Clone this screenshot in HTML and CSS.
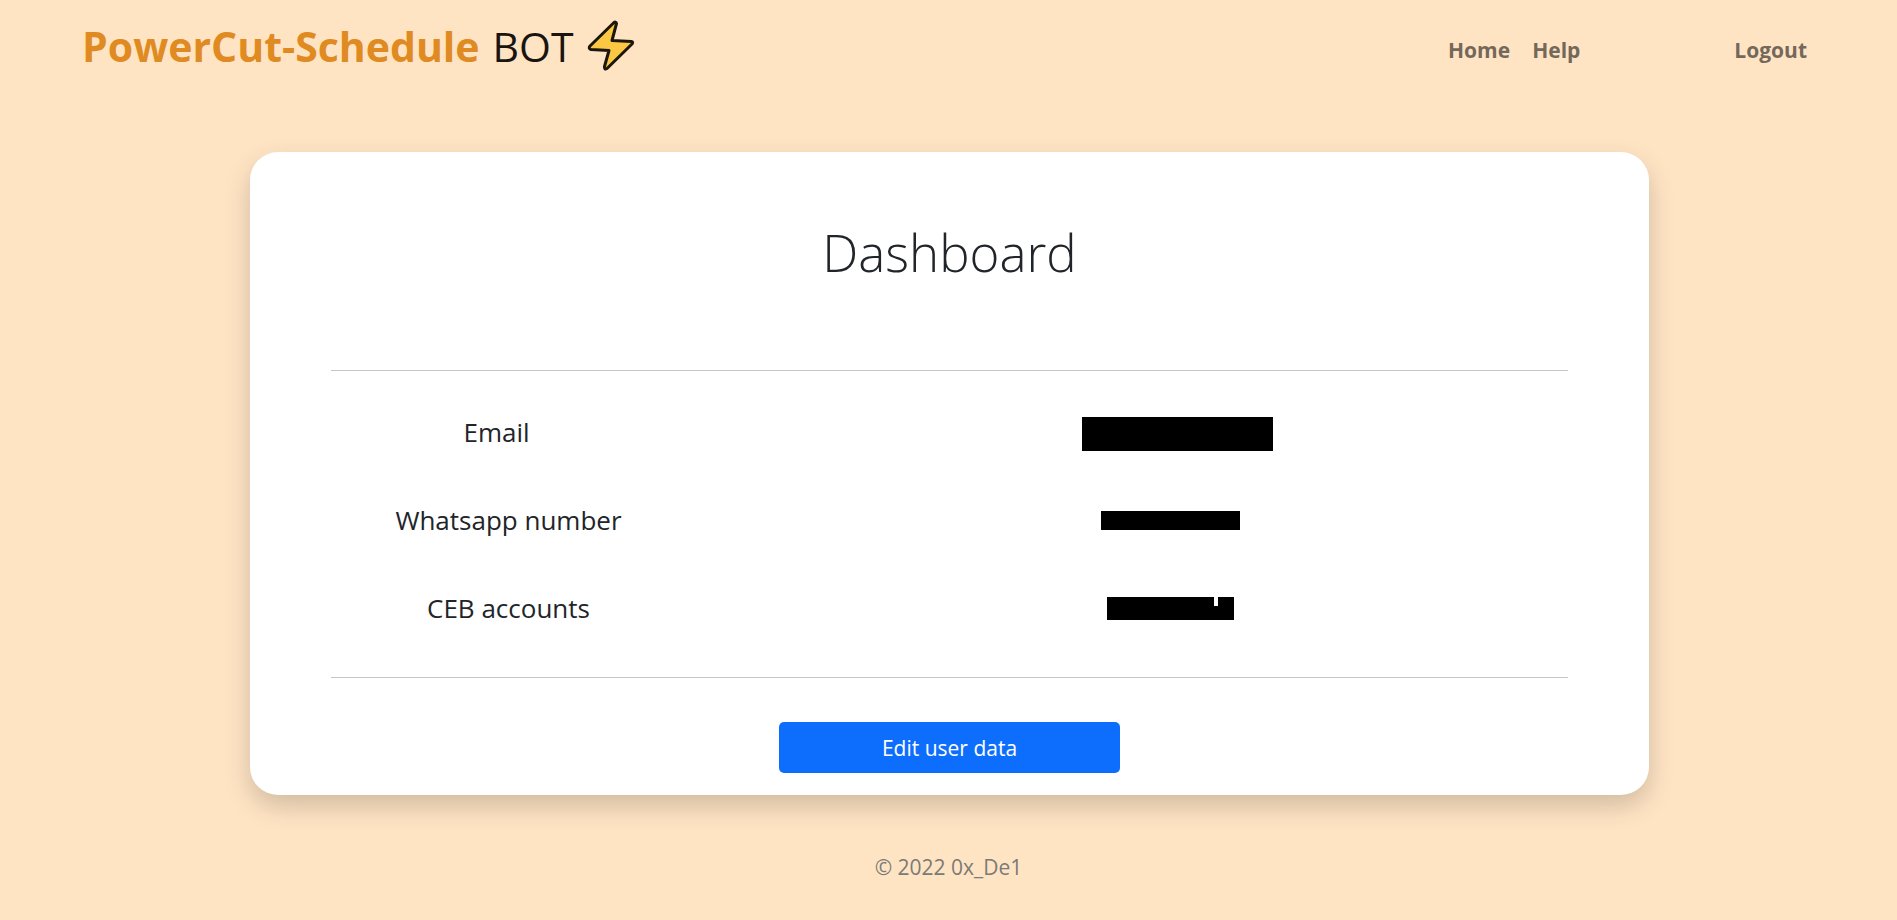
FILE: index.html
```html
<!DOCTYPE html>
<html lang="en">
<head>
<meta charset="utf-8">
<title>PowerCut-Schedule BOT</title>
<link rel="stylesheet" href="styles.css">
</head>
<body>
<header class="header">
  <a class="brand" href="#"><strong class="brand-name">PowerCut-Schedule</strong> <span class="brand-suffix">BOT</span>
    <svg class="bolt" viewBox="0 0 48 52" aria-hidden="true"><path d="M29.500 3.500 25 20.500 44.500 21.500Q46.500 22 45 24L20 48.500Q17 50 17.500 46.500L22 30.500 4 29.500Q1 28.500 3 26L26.500 3Q29 1 29.500 3.500Z"/></svg>
  </a>
  <nav class="nav">
    <a href="#">Home</a>
    <a href="#">Help</a>
    <a class="logout" href="#">Logout</a>
  </nav>
</header>
<main class="card">
  <h1 class="title">Dashboard</h1>
  <hr class="rule">
  <table class="details">
    <tbody>
      <tr class="row-email"><th scope="row">Email</th><td><span class="redacted redacted-email"></span></td></tr>
      <tr><th scope="row">Whatsapp number</th><td><span class="redacted redacted-phone"></span></td></tr>
      <tr><th scope="row">CEB accounts</th><td><span class="redacted redacted-account"></span></td></tr>
    </tbody>
  </table>
  <hr class="rule">
  <button class="edit" type="button">Edit user data</button>
</main>
<footer class="footer">© 2022 0x_De1</footer>
</body>
</html>
```
FILE: styles.css
```css
* { box-sizing: border-box; }
body {
  margin: 0;
  background: #ffe4c4;
  color: #212529;
  font-family: "Segoe UI", "Open Sans", "Noto Sans", sans-serif;
  font-size: 21px;
}
a { text-decoration: none; }
.header {
  display: flex;
  align-items: center;
  justify-content: space-between;
  height: 92px;
  padding: 0 90px 0 82px;
}
.brand {
  display: flex;
  align-items: center;
  gap: 13px;
  color: #1a1410;
  font-size: 41px;
  line-height: 58px;
}
.brand-name { color: #df8b22; font-weight: 700; }
.bolt { width: 48px; height: 52px; }
.bolt path {
  fill: #fcc844;
  stroke: #1b170d;
  stroke-width: 3;
  stroke-linejoin: round;
}
.nav { display: flex; gap: 22px; padding-top: 7px; }
.nav a { color: #74685a; font-weight: 700; line-height: 32px; }
.nav .logout { margin-left: 132px; }
.card {
  display: flex;
  flex-direction: column;
  align-items: center;
  margin: 60px 248px 0 250px;
  padding: 66px 81px 22px;
  border-radius: 28px;
  background: #fff;
  box-shadow: 0 11px 26px rgba(0, 0, 0, 0.18);
}
.title {
  margin: 0 0 84px;
  font-size: 51px;
  font-weight: 300;
  line-height: 68px;
}
.rule {
  width: 100%;
  height: 1px;
  margin: 0;
  border: 0;
  background: #c4c5c6;
}
.details {
  width: 100%;
  margin: 17px 0 25px;
  border-collapse: collapse;
  table-layout: fixed;
  font-size: 26px;
  text-align: center;
}
.details th, .details td { height: 88px; padding: 0; vertical-align: middle; }
.details th { width: 355px; font-weight: 400; text-align: center; }
.details td { padding-left: 87px; }
.row-email th { padding-right: 24px; }
.row-email td { padding-top: 4px; padding-left: 101px; }
.redacted { display: block; margin: 0 auto; background: #000; }
.redacted-email { width: 191px; height: 34px; }
.redacted-phone { width: 139px; height: 19px; }
.redacted-account {
  width: 127px;
  height: 23px;
  background: linear-gradient(#fff, #fff) 107px 0 / 4px 9px no-repeat #000;
}
.edit {
  width: 341px;
  height: 51px;
  margin-top: 44px;
  border: 0;
  border-radius: 5px;
  background: #0d6efd;
  color: #fff;
  font: inherit;
}
.footer {
  margin-top: 56px;
  color: #7b7a76;
  line-height: 32px;
  text-align: center;
}
```
